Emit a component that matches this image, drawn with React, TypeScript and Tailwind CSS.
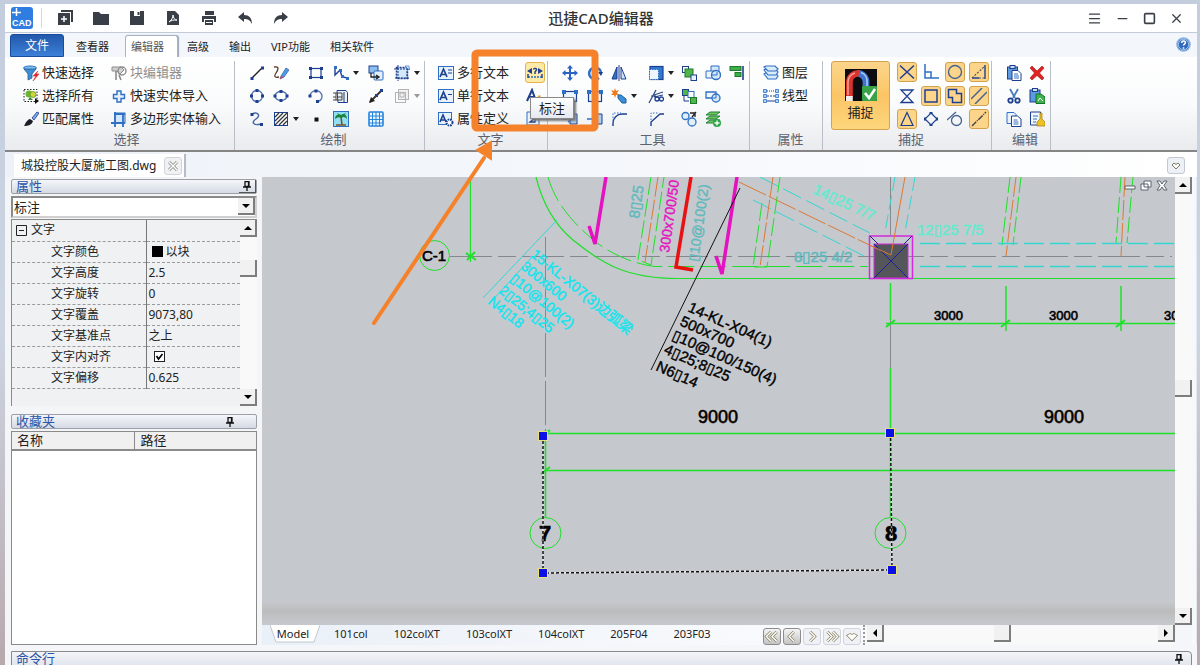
import React, { useState } from 'react'
import { Menu, Minus, Square, X } from 'lucide-react'

const UI_FONT = "font-['Noto_Sans','Noto_Sans_CJK_SC',sans-serif]"

const NAVY = '#1d3f8f'
const BLUE = '#2f6fc4'

const glyphs: Record<string, React.ReactNode> = {
  filter: (
    <>
      <ellipse cx="7" cy="3" rx="6.5" ry="2" fill="#7cc0ee" stroke={BLUE} />
      <path d="M1 4l4 5v6l4-2V9l4-5z" fill="#3f8ed2" stroke="#225d9e" strokeWidth=".8" />
      <path d="M15 6l-5 5h3l-3 5 6-7h-3z" fill="#e02a2a" stroke="#e02a2a" strokeWidth=".6" />
    </>
  ),
  selectAll: (
    <>
      <rect x="1" y="1.5" width="13" height="12" fill="none" stroke="#222" strokeDasharray="1.5 1.5" />
      <circle cx="6" cy="6" r="3.5" fill="#6bb432" />
      <circle cx="10" cy="6.5" r="3" fill="#cfd63a" stroke="#4c8a1e" strokeWidth=".7" />
      <path d="M5 12l2-3 3 3z" fill="#2f8a3c" />
      <path d="M12 10v6l4-3z" fill="#111" />
    </>
  ),
  brush: (
    <>
      <path d="M9 7l5-6 2 1-5 7z" fill="#7fa9e0" stroke={NAVY} strokeWidth=".8" />
      <path d="M1 15c1-1 2-6 6-7l3 2c-1 4-5 5-9 5z" fill="#1c1c28" />
    </>
  ),
  blockEdit: (
    <>
      <path d="M1 2h9l3 3-4 4-3-3H1z" fill="#d0d0d0" stroke="#8c8c8c" />
      <circle cx="11" cy="6" r="4" fill="none" stroke="#8c8c8c" strokeWidth="1.4" />
      <path d="M5 6v9M8 10l2 5" stroke="#8c8c8c" strokeWidth="1.6" />
    </>
  ),
  plus: <path d="M6 3h4v3.500h3.500v4H10V14H6v-3.500H2.500v-4H6z" fill="#e6f1fd" stroke={BLUE} strokeWidth="1.4" />,
  poly: (
    <>
      <rect x="4" y="2" width="10" height="10" fill="#d2e7fa" stroke={BLUE} />
      <path d="M4 1v15M0 12h14M12 2v14M3 3h11" stroke={BLUE} strokeWidth="1.8" />
    </>
  ),
  line: (
    <>
      <path d="M3 13L13 3" stroke="#222" strokeWidth="1.3" />
      <path d="M1.500 12h3v3h-3zM12 1.500h3v3h-3z" fill={NAVY} />
    </>
  ),
  sketch: (
    <>
      <path d="M1 2c6-1 4 3 2 6s-2 5 3 4" fill="none" stroke="#5a3820" strokeWidth="1.3" />
      <path d="M8 11l5-8 3 2-5 7-4 2z" fill="#4aa0e8" stroke={NAVY} strokeWidth=".6" />
      <path d="M7 14l1-3 3 1z" fill="#d24848" />
    </>
  ),
  rect: (
    <>
      <rect x="3" y="3.500" width="10" height="9" fill="none" stroke={NAVY} strokeWidth="1.2" />
      <path d="M1 2h3v3H1zM12 2h3v3h-3zM1 11h3v3H1zM12 11h3v3h-3z" fill={NAVY} />
    </>
  ),
  polyline: (
    <>
      <path d="M2 3v7l5-5 2 7 6 1" fill="none" stroke={NAVY} strokeWidth="1.4" />
      <path d="M1 1h3v3H1zM6 4h3v3H6zM8 10h3v3H8zM13 12h3v3h-3z" fill={BLUE} />
    </>
  ),
  insert: (
    <>
      <rect x="1" y="1" width="9" height="7" fill="#8bc0ee" stroke={NAVY} />
      <rect x="6" y="6" width="9" height="9" rx="1" fill="#e3f0fc" stroke={BLUE} />
      <path d="M3 8v4h7M8 10l3 2-3 2" fill="none" stroke="#222" strokeWidth="1.3" />
    </>
  ),
  region: (
    <>
      <rect x="2.500" y="2.500" width="11" height="11" fill="#d3e8fa" stroke={NAVY} strokeDasharray="2 1" strokeWidth="1.5" />
      <path d="M0 4h16M4 0v16M1 13h14M13 6v9" stroke={NAVY} strokeDasharray="2 1" />
      <path d="M11 1h4v4z" fill="#ecf4fc" stroke={BLUE} strokeWidth=".7" />
    </>
  ),
  circle: (
    <>
      <circle cx="8" cy="8" r="5.500" fill="none" stroke="#5878b0" strokeWidth="1.4" />
      <path d="M6.500 1h3v3h-3zM6.500 12h3v3h-3zM1 6.500h3v3H1zM12 6.500h3v3h-3z" fill={NAVY} />
    </>
  ),
  ellipse: (
    <>
      <ellipse cx="8" cy="8" rx="6" ry="4.500" fill="none" stroke="#5878b0" strokeWidth="1.4" />
      <path d="M6.500 2h3v3h-3zM6.500 11h3v3h-3zM.5 6.500h3v3h-3zM12.500 6.500h3v3h-3z" fill={NAVY} />
    </>
  ),
  arc: (
    <>
      <path d="M2 8a6 5.500 0 1 1 8 5.500" fill="none" stroke="#5878b0" strokeWidth="1.5" />
      <path d="M.5 6.500h3v3h-3zM6.500 1.500h3v3h-3zM8 12h3v3H8z" fill={NAVY} />
    </>
  ),
  scroll: (
    <>
      <path d="M4 2.500h9l1.500 2v10H5z" fill="#eef3fa" stroke={NAVY} />
      <path d="M3 5h6v7H3zM0 5h3M0 9h3M0 12h3M5 9h4" fill="none" stroke="#444" />
      <path d="M11 4v10" stroke="#7f97bd" strokeWidth="2" />
    </>
  ),
  ray: (
    <>
      <path d="M2 14L13 3" stroke="#4a2f20" strokeWidth="2" />
      <path d="M1 15l2-6 4 4z" fill="#222" />
      <path d="M12 1h3v3h-3zM7 6h3v3H7z" fill={NAVY} />
    </>
  ),
  copyGrey: (
    <>
      <rect x="4.500" y="1.500" width="10" height="10" fill="#f1f1f1" stroke="#b3b3b3" />
      <rect x="1.500" y="4.500" width="10" height="10" fill="none" stroke="#b3b3b3" />
      <rect x="6" y="5" width="4" height="4" fill="none" stroke="#b3b3b3" />
    </>
  ),
  spline: (
    <>
      <path d="M3 3c6-3 9 2 4 5s-3 7 5 5" fill="none" stroke="#45679f" strokeWidth="1.4" />
      <path d="M1.500 2h3v3h-3zM11 12h3v3h-3z" fill={NAVY} />
    </>
  ),
  hatch: (
    <>
      <rect x="1.500" y="1.500" width="13" height="13" fill="#fff" stroke={NAVY} />
      <path d="M2 6l4-4M2 10l8-8M2 14L14 2M6 14l8-8M10 14l4-4" stroke="#333" strokeWidth="1.2" />
    </>
  ),
  dot: <rect x="6.500" y="6.500" width="4" height="4" fill="#111" />,
  palm: (
    <>
      <rect x=".5" y=".5" width="15" height="15" fill="#8fe0f5" stroke={BLUE} />
      <path d="M8 6l1 8M3 14h10" stroke="#7c5221" strokeWidth="1.6" />
      <path d="M2 8c0-4 2-5 6-4 2-2 6-1 6 4-2-2-3-2-5-2-2 0-4 0-7 2zM4 2l4 2 5-2-4 5-2 0z" fill="#1d8338" />
    </>
  ),
  table: (
    <>
      <rect x="1" y="1" width="14" height="14" rx="1" fill="#eaf4fd" stroke="#2584dc" strokeWidth="1.6" />
      <path d="M1 5h14M1 8.500h14M1 12h14M4.500 1v14M8 1v14M11.500 1v14" stroke="#2584dc" />
    </>
  ),
  mtext: (
    <>
      <rect x=".5" y="1.500" width="15" height="13" fill="#e8f2fc" stroke={BLUE} />
      <path d="M2 12L5.500 4 9 12M3.500 9.500h4" fill="none" stroke={NAVY} strokeWidth="1.7" />
      <path d="M10 5h4M10 8h4" stroke={NAVY} />
    </>
  ),
  stext: (
    <>
      <rect x=".5" y="1.500" width="15" height="13" fill="#e8f2fc" stroke={BLUE} />
      <path d="M2 12L5.500 4 9 12M3.500 9.500h4" fill="none" stroke={NAVY} strokeWidth="1.7" />
      <path d="M10 6.500h4" stroke={NAVY} />
    </>
  ),
  attdef: (
    <>
      <rect x=".5" y="1.500" width="13" height="12" fill="#e8f2fc" stroke={BLUE} />
      <path d="M2 11L5 4l3 7M3 9h4" fill="none" stroke={NAVY} strokeWidth="1.6" />
      <circle cx="11.500" cy="11.500" r="3" fill="#fff" stroke={NAVY} strokeWidth="2" strokeDasharray="1.600 .8" />
    </>
  ),
  dim: (
    <>
      <path d="M0 6l5-3v6zM16 6l-5-3v6z" fill={NAVY} />
      <path d="M6.500 4.500c.5-2 3.500-1 3 .5L8 7v2" fill="none" stroke={NAVY} strokeWidth="1.4" />
      <path d="M1 12h14" stroke={BLUE} strokeWidth="1.6" strokeDasharray="2 1" />
      <path d="M1 9v4M15 9v4" stroke={NAVY} strokeWidth="1.400" />
    </>
  ),
  styleA: (
    <>
      <path d="M2 13L7 2l4 11M4 9h6" fill="none" stroke={NAVY} strokeWidth="2" />
      <path d="M9 13l5-6 2 1-5 6z" fill="#e6a93a" />
    </>
  ),
  page: (
    <>
      <path d="M2 1h12v13H2z" fill="#e8f2fc" stroke={BLUE} />
      <path d="M5 11l5-4v4zM1 15h13" fill="none" stroke={NAVY} strokeWidth="1.3" />
    </>
  ),
  move: (
    <path d="M8 0l3 3.500H9V7h3.500V5L16 8l-3.500 3V9H9v3.500h2L8 16l-3-3.500h2V9H3.500v2L0 8l3.500-3v2H7V3.500H5z" fill="#2a63c4" />
  ),
  rotate: (
    <>
      <path d="M12 13A6 6 0 1 1 14 7" fill="none" stroke={BLUE} strokeWidth="2.5" />
      <path d="M11 7h5l-2 4z" fill={NAVY} />
    </>
  ),
  mirror: (
    <>
      <path d="M6 2v12H1z" fill="#2f6fc4" stroke={NAVY} />
      <path d="M10 2v12h5z" fill="#cfe3f8" stroke={NAVY} />
      <path d="M8 0v16" stroke={NAVY} />
    </>
  ),
  scale: (
    <>
      <rect x="2" y="1.500" width="13" height="13" fill="#2f79d0" stroke={NAVY} strokeWidth="1.2" />
      <rect x="1.500" y="4.500" width="9" height="10" fill="#eef6fd" stroke={BLUE} strokeDasharray="1.500 1" />
    </>
  ),
  group: (
    <>
      <rect x="1.500" y="1.500" width="6" height="6" fill="#fff" stroke={NAVY} />
      <rect x="4" y="4" width="8" height="8" fill="#4fb748" stroke="#1e7a2b" />
      <rect x="10" y="10" width="5.500" height="5.500" fill="#eaf4fd" stroke={NAVY} />
    </>
  ),
  group2: (
    <>
      <rect x="1.500" y="1.500" width="6" height="6" fill="#4fb748" stroke={NAVY} />
      <rect x="7" y="3.500" width="6" height="6" fill="#fff" stroke={BLUE} />
      <rect x="9.500" y="9.500" width="6" height="6" fill="#4fb748" stroke="#1e7a2b" />
      <path d="M3 8v5h5" fill="none" stroke={NAVY} />
    </>
  ),
  shapes: (
    <>
      <path d="M6 1h8v6H6z" fill="#d3e8fa" stroke={BLUE} />
      <path d="M1 6h8v7H1z" fill="#eef6fd" stroke={BLUE} />
      <circle cx="11" cy="10" r="4.500" fill="#d3e8fa" stroke={BLUE} strokeWidth="1.3" />
      <path d="M7 10h5v-3" fill="none" stroke={BLUE} />
    </>
  ),
  shapes2: (
    <>
      <path d="M1 4h10v6H1z" fill="#eef6fd" stroke={BLUE} strokeWidth="1.300" />
      <circle cx="11" cy="10" r="4" fill="#d3e8fa" stroke={BLUE} strokeWidth="1.3" />
      <path d="M8 10h3v-4" fill="none" stroke={BLUE} />
    </>
  ),
  align: (
    <>
      <rect x="1" y="1.500" width="11" height="4" fill="#3fae49" stroke="#1e7a2b" />
      <rect x="6" y="7.500" width="6" height="4" fill="#3fae49" stroke="#1e7a2b" />
      <path d="M14 1v14" stroke={NAVY} strokeWidth="1.600" />
    </>
  ),
  box: (
    <>
      <rect x="1.500" y="3.500" width="13" height="10" fill="#eef6fd" stroke={NAVY} strokeWidth="1.2" />
      <path d="M0 2h4v4H0zM12 2h4v4h-4z" fill={BLUE} />
    </>
  ),
  explode: (
    <>
      <path d="M4 0l1 3 3-1-2 3 2 2-3 0-1 3-1-3-3 0 2-2-2-3 3 1z" fill="#f07b1c" />
      <path d="M7 7l3 0 5 4 0 4-4 0-4-5z" fill="#3a8fd8" stroke="#1f5c96" />
    </>
  ),
  trim: (
    <>
      <path d="M1 15L8 2" stroke="#2f4c86" strokeWidth="1.300" />
      <path d="M3 8h5M6 7l9-3M6 9l9-2" stroke="#2f4c86" strokeWidth="1.200" />
      <circle cx="9" cy="11" r="2" fill="none" stroke={NAVY} strokeWidth="1.300" />
      <circle cx="13.500" cy="11" r="2" fill="none" stroke={NAVY} strokeWidth="1.300" />
    </>
  ),
  stretch: (
    <>
      <path d="M8 3h7v10H8z" fill="#a8cef2" stroke={NAVY} />
      <path d="M0 8h9M6 5l4 3-4 3" fill="none" stroke={BLUE} strokeWidth="1.600" />
    </>
  ),
  fillet: (
    <>
      <path d="M2 15V12a9 9 0 0 1 9-9h5" fill="none" stroke={NAVY} strokeWidth="1.400" />
      <path d="M2 10V2h8" fill="none" stroke={BLUE} strokeDasharray="1.500 1.500" />
    </>
  ),
  chamfer: (
    <>
      <path d="M3 15V11l9-8h4" fill="none" stroke={NAVY} strokeWidth="1.400" />
      <path d="M3 9V2h8" fill="none" stroke={BLUE} strokeDasharray="1.500 1.500" />
    </>
  ),
  link: (
    <>
      <circle cx="4.500" cy="5" r="3.500" fill="#e2effb" stroke={BLUE} strokeWidth="1.300" />
      <circle cx="11" cy="11" r="4" fill="#e2effb" stroke={BLUE} strokeWidth="1.300" />
      <path d="M9 2h5v4M11 6l4-5" fill="none" stroke="#222" strokeWidth="1.300" />
    </>
  ),
  layersGreen: (
    <>
      <path d="M1 4l4-3h10l-4 3zM1 8l4-3h10l-4 3zM1 12l4-3h10l-4 3z" fill="#6cc65f" stroke="#23803a" />
      <circle cx="12" cy="12" r="4" fill="#2fa348" />
      <path d="M12 9.500v5M9.500 12h5" stroke="#fff" strokeWidth="1.300" />
    </>
  ),
  layers: (
    <>
      <path d="M1 9l3-2h8l3 4-2 3H5z" fill="#d9ecfb" stroke={BLUE} strokeWidth="1.200" />
      <path d="M1 5l3-2h8l3 4-2 3H5z" fill="#d9ecfb" stroke={BLUE} strokeWidth="1.200" />
      <path d="M1 2l2-1h9l3 3-2 2H5z" fill="#d9ecfb" stroke={BLUE} strokeWidth="1.200" />
    </>
  ),
  ltype: (
    <>
      <path d="M4 3h9" stroke={NAVY} strokeDasharray="1 1" />
      <path d="M4 8h9" stroke={NAVY} strokeDasharray="2 1" />
      <path d="M4 13h9" stroke={NAVY} />
      <path d="M.5 1.500h3v3h-3zM.5 6.500h3v3h-3zM.5 11.500h3v3h-3zM12.500 1.500h3v3h-3zM12.500 6.500h3v3h-3zM12.500 11.500h3v3h-3z" fill="#a9d2f4" stroke={BLUE} strokeWidth=".8" />
    </>
  ),
  sCross: <path d="M1 1.500l14 13M15 1.500l-14 13" stroke={NAVY} strokeWidth="1.500" />,
  sPerp: <path d="M2 0v14h14M2 8h6v6" fill="none" stroke={BLUE} strokeWidth="1.500" />,
  sCircle: <circle cx="8" cy="8" r="6.500" fill="none" stroke="#48648e" strokeWidth="1.400" />,
  sExt: (
    <>
      <path d="M1 14H8M14 15V1" fill="none" stroke={NAVY} strokeWidth="1.400" />
      <path d="M1 14L14 2M8 14h6" stroke="#555" strokeDasharray="2 1.500" strokeWidth="1.200" />
    </>
  ),
  sHour: <path d="M2 2h12L2 14.500h12L2 2z" fill="none" stroke={NAVY} strokeWidth="1.300" />,
  sSquare: <rect x="2" y="2" width="12" height="12" fill="none" stroke={NAVY} strokeWidth="1.500" />,
  sPoly: <path d="M1.500 1.500h8v4h5v9h-9v-5h-4z" fill="none" stroke={NAVY} strokeWidth="1.500" />,
  sPar: <path d="M0 11L11 0M4 16L16 4" stroke="#48648e" strokeWidth="1.500" />,
  sTri: <path d="M8 1.500l6 13H2z" fill="none" stroke={NAVY} strokeWidth="1.200" />,
  sQuad: (
    <>
      <path d="M8 2l6 6-6 6-6-6z" fill="none" stroke={NAVY} strokeWidth="1.200" />
      <path d="M6.500 1h3v2h-3zM6.500 13h3v2h-3zM1 6.500h2v3H1zM13 6.500h2v3h-2z" fill={NAVY} />
    </>
  ),
  sTan: (
    <>
      <circle cx="9.500" cy="9.500" r="5" fill="none" stroke="#48648e" strokeWidth="1.300" />
      <path d="M0 9L9 1" stroke="#48648e" strokeWidth="1.300" />
    </>
  ),
  sNear: <path d="M1 15L15 1" stroke="#444" strokeWidth="1.400" strokeDasharray="6 1 1 1" />,
  paste: (
    <>
      <rect x="1.500" y="2" width="10" height="12" fill="#5c9be0" stroke={NAVY} />
      <rect x="4" y=".5" width="5" height="3" fill="#cfdff2" stroke={NAVY} />
      <path d="M6 5.500h6l3 3v7H6z" fill="#fff" stroke={NAVY} />
      <path d="M8 9h4M8 11h5M8 13h5" stroke={BLUE} />
    </>
  ),
  del: <path d="M3 1l5 5 5-5 2 2-4.500 5L15 13l-2 2-5-4.500L3 15l-2-2 4.500-5L1 3z" fill="#df2323" stroke="#a31212" strokeWidth=".6" />,
  cut: (
    <>
      <path d="M4 1l5 9M12 1L7 10" stroke="#4a7dc0" strokeWidth="1.800" />
      <circle cx="4.500" cy="12.500" r="2.200" fill="none" stroke={NAVY} strokeWidth="1.800" />
      <circle cx="11.500" cy="12.500" r="2.200" fill="none" stroke={NAVY} strokeWidth="1.800" />
    </>
  ),
  pasteGreen: (
    <>
      <rect x="1" y="2" width="10" height="12" fill="#5c9be0" stroke={NAVY} />
      <rect x="3.500" y=".5" width="5" height="3" fill="#cfdff2" stroke={NAVY} />
      <path d="M7 6h5l4 3v6.500H7z" fill="#3fb34c" stroke="#16702a" />
      <path d="M9 13l2-3 3 3" fill="none" stroke="#fff" />
    </>
  ),
  copy: (
    <>
      <path d="M1 1.500h7l2 2v9H1z" fill="#eaf3fc" stroke={BLUE} />
      <path d="M5.500 5h6l3.500 3v7.500H5.500z" fill="#fff" stroke={NAVY} />
      <path d="M7.500 9h4M7.500 11h5M7.500 13h5" stroke={BLUE} />
    </>
  ),
  clean: (
    <>
      <path d="M1.500 1h10v13h-10z" fill="#f2f7fd" stroke={NAVY} />
      <path d="M4 5h5M4 8h4M4 11h3" stroke={BLUE} />
      <path d="M11 2h2v6l3 3v4H8v-4l3-3z" fill="#edc227" stroke="#9b7a0a" strokeWidth=".7" />
    </>
  ),
  magnet: (
    <>
      <rect x="0" y="0" width="16" height="16" fill="#0b0b10" />
      <path d="M6.500 2.200A4.300 4.300 0 0 1 10.500 6.500V10" fill="none" stroke="#3f74cf" strokeWidth="3.400" />
      <path d="M2.200 14V6.500A4.300 4.300 0 0 1 7 2.200" fill="none" stroke="#d9332c" strokeWidth="3.400" />
      <path d="M1.500 13V6.500A5 5 0 0 1 5 2" fill="none" stroke="#f39b93" strokeWidth=".8" />
      <path d="M8 1.800A4.500 4.500 0 0 1 11 6.500V9" fill="none" stroke="#a9c8f2" strokeWidth=".8" />
      <path d="M.5 13.500h3.400V16H.5z" fill="#eee" />
      <rect x="8.500" y="8.500" width="7.500" height="7.500" rx=".5" fill="#38a249" />
      <path d="M10 12l2 2.500 3-4.500" fill="none" stroke="#fff" strokeWidth="1.300" />
    </>
  ),
}

const Glyph = ({ name, className = 'h-4 w-4' }: { name: string; className?: string }) => (
  <svg viewBox="0 0 16 16" className={`shrink-0 ${className}`} aria-hidden="true">{glyphs[name]}</svg>
)

const Caret = ({ grey }: { grey?: boolean }) => (
  <svg viewBox="0 0 6 4" className="h-1 w-1.5 shrink-0"><path d="M0 0h6L3 4z" fill={grey ? '#999' : '#222'} /></svg>
)

// a trailing "v" in the third slot means the tool has a drop-down
type Tool = [string, string, string?]

const ToolButton = ({ tool }: { tool: Tool | null }) =>
  tool ? (
    <button type="button" aria-label={tool[1]} className="flex h-[23px] items-center gap-1">
      <Glyph name={tool[0]} />
      {tool[2] && <Caret grey={tool[0] === 'copyGrey'} />}
    </button>
  ) : (
    <span />
  )

const TextTool = ({ icon, label, muted }: { icon: string; label: string; muted?: boolean }) => (
  <button type="button" className={`flex h-[23px] items-center gap-[3px] whitespace-nowrap text-[13px] leading-[23px] ${muted ? 'text-[#8f8f8f]' : 'text-[#222]'}`}>
    <Glyph name={icon} />
    {label}
  </button>
)

const Group = ({ title, className, children }: { title: string; className: string; children: React.ReactNode }) => (
  <section className={`flex shrink-0 flex-col border-r border-[#b9bfc8] ${className}`}>
    <div className="h-[69px]">{children}</div>
    <h2 className="whitespace-nowrap text-center text-[13px] leading-[18px] text-[#5c6370]">{title}</h2>
  </section>
)

const drawTools: (Tool | null)[] = [
  ['line', '直线'], ['sketch', '草图'], ['rect', '矩形'], ['polyline', '多段线', 'v'], ['insert', '插入块'], ['region', '面域', 'v'],
  ['circle', '圆'], ['ellipse', '椭圆'], ['arc', '圆弧'], ['scroll', '云线'], ['ray', '射线'], ['copyGrey', '边界', 'v'],
  ['spline', '样条曲线'], ['hatch', '填充', 'v'], ['dot', '点'], ['palm', '图像'], ['table', '表格'], null,
]

const modifyTools: (Tool | null)[] = [
  ['move', '移动'], ['rotate', '旋转'], ['mirror', '镜像'], ['scale', '缩放', 'v'], ['group', '组'], ['shapes', '合并'], ['align', '对齐'],
  ['box', '拉长'], ['box', '阵列'], ['explode', '分解', 'v'], ['trim', '修剪', 'v'], ['group2', '取消组'], ['shapes2', '差集'], null,
  ['stretch', '拉伸'], ['stretch', '延伸'], ['fillet', '圆角'], ['chamfer', '倒角'], ['link', '替换'], ['layersGreen', '添加图层'], null,
]

const snaps: [string, boolean][] = [
  ['sCross', true], ['sPerp', false], ['sCircle', true], ['sExt', true],
  ['sHour', false], ['sSquare', true], ['sPoly', true], ['sPar', true],
  ['sTri', true], ['sQuad', false], ['sTan', false], ['sNear', true],
]

const editTools: Tool[] = [
  ['paste', '粘贴'], ['del', '删除'],
  ['cut', '剪切'], ['pasteGreen', '粘贴为块'],
  ['copy', '复制'], ['clean', '清理'],
]

const Ribbon = () => (
  <div className="flex h-[95px] shrink-0 overflow-hidden border-b-2 border-[#858585] bg-linear-to-b from-white via-[#fafbfc] to-[#e9ebee] pt-1">
    <Group title="选择" className="w-[230px] pl-[18px] pr-1">
      <div className="grid grid-cols-[88px_auto] justify-start">
        <TextTool icon="filter" label="快速选择" />
        <TextTool icon="blockEdit" label="块编辑器" muted />
        <TextTool icon="selectAll" label="选择所有" />
        <TextTool icon="plus" label="快速实体导入" />
        <TextTool icon="brush" label="匹配属性" />
        <TextTool icon="poly" label="多边形实体输入" />
      </div>
    </Group>
    <Group title="绘制" className="w-[190px] pl-[14px] pr-1.5">
      <div className="grid grid-cols-[24px_35px_25px_35px_26px_30px]">
        {drawTools.map((tool, i) => <ToolButton key={i} tool={tool} />)}
      </div>
    </Group>
    <Group title="文字" className="w-[123px] pl-[13px] pr-1">
      <div className="grid grid-cols-[87px_auto] justify-start">
        <TextTool icon="mtext" label="多行文本" />
        <button type="button" aria-label="标注" className="my-px flex h-[21px] w-[20px] items-center justify-center rounded-[3px] border border-[#e3b54f] bg-[#fdeaa6]"><Glyph name="dim" /></button>
        <TextTool icon="stext" label="单行文本" />
        <ToolButton tool={['styleA', '文字样式']} />
        <TextTool icon="attdef" label="属性定义" />
        <ToolButton tool={['page', '字段']} />
      </div>
    </Group>
    <Group title="工具" className="w-[202px] pl-[14px] pr-1.5">
      <div className="grid grid-cols-[25px_24px_37px_33px_24px_24px_16px]">
        {modifyTools.map((tool, i) => <ToolButton key={i} tool={tool} />)}
      </div>
    </Group>
    <Group title="属性" className="w-[73px] pl-[13px] pr-1">
      <TextTool icon="layers" label="图层" />
      <TextTool icon="ltype" label="线型" />
    </Group>
    <Group title="捕捉" className="w-[169px] pl-[8px]">
      <div className="flex gap-[7px]">
        <button type="button" className="flex h-[69px] w-[59px] flex-col items-center rounded-[3px] border border-[#d2a24c] bg-linear-to-b from-[#fbd58a] via-[#fbc565] to-[#fdd67c] pt-[7px] text-[13px] leading-[22px] text-[#222]">
          <Glyph name="magnet" className="h-8 w-8" />
          捕捉
        </button>
        <div className="grid grid-cols-4 gap-x-1 gap-y-[3px] pt-px">
          {snaps.map(([name, on]) => (
            <button
              key={name}
              type="button"
              aria-label={name}
              aria-pressed={on}
              className={`flex h-[20px] w-[20px] items-center justify-center rounded-[3px] border ${on ? 'border-[#d2a24c] bg-[#fcd58b]' : 'border-transparent'}`}
            >
              <Glyph name={name} />
            </button>
          ))}
        </div>
      </div>
    </Group>
    <Group title="编辑" className="w-[59px] pl-[14px] pr-1.5">
      <div className="grid grid-cols-[23px_16px]">
        {editTools.map((tool) => <ToolButton key={tool[0]} tool={tool} />)}
      </div>
    </Group>
  </div>
)

const quickIcons: [string, React.ReactNode][] = [
  ['新建', <><path d="M4 0h12v12h-2V2H4z" fill="#3a3f47" /><rect x="1" y="3" width="12" height="12" fill="#3a3f47" /><path d="M7 6v6M4 9h6" stroke="#fff" strokeWidth="1.500" /></>],
  ['打开', <path d="M0 2h6l2 2h8v11H0z" fill="#3a3f47" />],
  ['保存', <><path d="M1 1h14v14H1z" fill="#3a3f47" /><path d="M5 1h6v5H5z" fill="#fff" /><path d="M8.500 2h2v3h-2z" fill="#3a3f47" /></>],
  ['导出PDF', <><path d="M2 1h8l4 4v10H2z" fill="#3a3f47" /><path d="M4 12c3-2 4-5 4-7 0 3 2 5 4 5-3 0-6 0-8 2z" fill="none" stroke="#fff" /></>],
  ['打印', <><path d="M4 1h9v4H4zM1 6h14v6h-2V9H3v3H1zM4 10h8v5H4z" fill="#3a3f47" /><path d="M5 12.500h6" stroke="#fff" /></>],
  ['撤销', <path d="M1 7l6-5v3c5 0 8 3 8 9-2-4-4-5-8-5v3z" fill="#3a3f47" />],
  ['重做', <path d="M15 7L9 2v3c-5 0-8 3-8 9 2-4 4-5 8-5v3z" fill="#3a3f47" />],
]

const TitleBar = () => (
  <header className="relative flex h-[29px] shrink-0 items-center border-b border-[#c3cbd8] bg-white text-[#3a3f47]">
    <svg viewBox="0 0 22 22" className="ml-[6px] h-[22px] w-[22px]">
      <rect width="22" height="22" rx="3" fill="#2f7de0" />
      <path d="M1 5.500h9M5.500 1v8" stroke="#fff" strokeWidth="1.500" />
      <text x="1" y="18.500" fontSize="9" fontWeight="bold" fill="#fff" fontFamily="Liberation Sans">CAD</text>
    </svg>
    <span className="ml-2 h-5 w-px bg-[#d4d8de]" />
    <nav className="ml-[15px] flex items-center gap-5">
      {quickIcons.map(([label, icon]) => (
        <button key={label} type="button" aria-label={label}><svg viewBox="0 0 16 16" className="h-4 w-4">{icon}</svg></button>
      ))}
    </nav>
    <h1 className="absolute left-1/2 -translate-x-1/2 text-[15px] font-medium leading-7 text-[#333]">迅捷CAD编辑器</h1>
    <div className="ml-auto mr-[13px] flex gap-[13px]">
      <button type="button" aria-label="菜单"><Menu size={15} strokeWidth={2} /></button>
      <button type="button" aria-label="最小化"><Minus size={15} strokeWidth={2} /></button>
      <button type="button" aria-label="最大化"><Square size={13} strokeWidth={3} /></button>
      <button type="button" aria-label="关闭"><X size={15} strokeWidth={2} /></button>
    </div>
  </header>
)

const menus = ['高级', '输出', 'VIP功能', '相关软件']

const MenuTabs = () => (
  <nav className="flex h-6 shrink-0 items-end bg-[#f3f6fb] text-[11px] leading-[20px] text-[#222]">
    <button type="button" className="ml-[5px] h-[23px] w-[54px] rounded-t-[3px] border border-[#174d9c] bg-linear-to-b from-[#2459ab] to-[#3b80d8] text-[12px] text-white">文件</button>
    <button type="button" className="ml-3">查看器</button>
    <button type="button" className="ml-4 h-[22px] w-[53px] rounded-t-[3px] border border-b-0 border-[#a9b5c6] bg-white pr-2 text-[#555] shadow-[1px_0_1px_#9aa6b8]">编辑器</button>
    <div className="ml-[9px] flex gap-5">
      {menus.map((m) => <button key={m} type="button">{m}</button>)}
    </div>
    <button type="button" aria-label="帮助" className="mb-[5px] ml-auto mr-[6px]">
      <svg viewBox="0 0 16 16" className="h-[15px] w-[15px]">
        <circle cx="8" cy="8" r="7" fill="#2e6bbd" stroke="#8ab2e4" strokeWidth="1.500" />
        <circle cx="8" cy="8" r="5.500" fill="none" stroke="#fff" strokeWidth=".6" />
        <path d="M6 6.500c0-3 4-3 4-.5 0 1.500-2 1.500-2 3M8 11v1.500" fill="none" stroke="#fff" strokeWidth="1.600" />
      </svg>
    </button>
  </nav>
)

const Pin = () => (
  <svg viewBox="0 0 10 10" className="h-2.5 w-2.5"><path d="M3 .5h4v5H3zM1 6h8M5 6v4M6.500 1v5" fill="none" stroke="#111" strokeWidth="1.300" /></svg>
)

const PanelHeader = ({ title, pin }: { title: string; pin: string }) => (
  <div className="flex h-[15px] items-center justify-between rounded-[2px] border border-[#9a9fa8] bg-linear-to-b from-[#f4f6fa] to-[#d5dae3] pl-1">
    <h2 className="text-[13px] leading-[13px] text-[#2c55a5]">{title}</h2>
    <button type="button" aria-label="固定" className={pin}><Pin /></button>
  </div>
)

type Dir = 'up' | 'down' | 'left' | 'right'
const arrows: Record<Dir, string> = {
  up: 'M0 6h8L4 2z',
  down: 'M0 2h8L4 6z',
  left: 'M6 0v8L2 4z',
  right: 'M2 0v8l4-4z',
}
const ScrollButton = ({ dir }: { dir: Dir }) => (
  <button type="button" aria-label={dir} className="flex h-[17px] w-[17px] shrink-0 items-center justify-center border-b-2 border-r-2 border-[#7d7d7d] bg-[#f1f1f1]">
    <svg viewBox="0 0 8 8" className="h-2 w-2"><path d={arrows[dir]} fill="#000" /></svg>
  </button>
)
const Thumb = () => <div className="h-[17px] w-[17px] shrink-0 border-b-2 border-r-2 border-[#7d7d7d] bg-[#f1f1f1]" />

const PropertiesPanel = () => {
  const [aligned, setAligned] = useState(true)
  const rows: [string, React.ReactNode][] = [
    ['文字颜色', <span className="flex items-center gap-[3px] pl-[3px]"><i className="h-[11px] w-[11px] bg-black" />以块</span>],
    ['文字高度', '2.5'],
    ['文字旋转', '0'],
    ['文字覆盖', '9073,80'],
    ['文字基准点', '之上'],
    ['文字内对齐', (
      <span className="relative ml-[5px] block h-[11px] w-[11px]">
        <input type="checkbox" aria-label="文字内对齐" checked={aligned} onChange={(e) => setAligned(e.target.checked)} className="block h-[11px] w-[11px] appearance-none border border-[#222] bg-white" />
        {aligned && <svg viewBox="0 0 11 11" className="pointer-events-none absolute inset-0"><path d="M2.500 5l2 3 4-5" fill="none" stroke="#000" strokeWidth="1.700" /></svg>}
      </span>
    )],
    ['文字偏移', '0.625'],
  ]
  return (
    <aside className="flex w-[257px] shrink-0 flex-col bg-[#f4f5f7] pl-[6px] pr-[5px] pt-[2px] text-[12px] text-[#222]">
      <PanelHeader title="属性" pin="flex h-[13px] w-[17px] items-center justify-center border-b border-r border-[#555]" />
      <div className="relative mt-[2px] flex h-[22px] items-center border-2 border-[#8a8a8a] border-b-[#d0d0d0] border-r-[#d0d0d0] bg-white">
        <select aria-label="对象类型" className="w-full appearance-none bg-transparent pl-px text-[13px] leading-[18px] outline-none">
          <option>标注</option>
        </select>
        <span className="pointer-events-none absolute right-0 top-0"><ScrollButton dir="down" /></span>
      </div>
      <div className="mt-px flex h-[187px] border-l border-t border-[#8a8a8a] bg-[#f0f1f3]">
        <div className="flex-1">
          <table className="w-full table-fixed border-collapse">
            <tbody>
              <tr className="h-[21px] border-b border-dashed border-[#9b9b9b]">
                <td className="w-[134px] border-r border-r-[#777] p-0">
                  <button type="button" className="flex items-center gap-1 pl-1 leading-[20px]">
                    <svg viewBox="0 0 11 11" className="h-[11px] w-[11px]"><path d="M.5.5h10v10H.5zM3 5.500h5" fill="none" stroke="#222" /></svg>
                    文字
                  </button>
                </td>
                <td className="p-0" />
              </tr>
              {rows.map(([name, value]) => (
                <tr key={name} className="h-[21px] border-b border-dashed border-[#9b9b9b]">
                  <th scope="row" className="border-r border-r-[#777] border-solid border-b-0 p-0 pl-[39px] text-left font-normal leading-[20px]">{name}</th>
                  <td className="p-0 pl-[2px] leading-[20px]">{value}</td>
                </tr>
              ))}
            </tbody>
          </table>
        </div>
        <div className="flex w-[17px] flex-col bg-[#f9f9f9]">
          <ScrollButton dir="up" />
          <div className="h-[23px]" />
          <Thumb />
          <div className="flex-1" />
          <ScrollButton dir="down" />
        </div>
      </div>
      <div className="mt-[8px]"><PanelHeader title="收藏夹" pin="mr-[21px]" /></div>
      <div className="mt-[2px] flex flex-1 flex-col border border-[#8a8a8a] bg-white">
        <table className="w-full table-fixed border-collapse">
          <thead>
            <tr className="h-[18px] border-b-2 border-[#8a8a8a] bg-[#f0f0f0] text-left leading-[17px]">
              <th className="w-[122px] border-r border-[#8a8a8a] p-0 pl-[5px] text-[13px] font-normal">名称</th>
              <th className="p-0 pl-[6px] text-[13px] font-normal">路径</th>
            </tr>
          </thead>
        </table>
      </div>
    </aside>
  )
}

const G = '#1fe02a'
const CY = '#35d6d2'
const OR = '#dc7a35'
const grips = [[543, 436], [890, 433], [543, 573], [892, 570]]

const Drawing = () => (
  <svg viewBox="262 177 913 448" preserveAspectRatio="xMinYMin slice" className="block h-full w-full" fontFamily="'Liberation Sans','DejaVu Sans','Noto Sans CJK SC',sans-serif">
    <defs>
      <linearGradient id="floor" x1="0" y1="0" x2="0" y2="1">
        <stop offset="0" stopColor="#c5c8cd" />
        <stop offset=".4" stopColor="#bcbcbc" />
        <stop offset="1" stopColor="#c5c9ce" />
      </linearGradient>
    </defs>
    <rect x="262" y="177" width="913" height="448" fill="#c5c8cd" />
    <rect x="262" y="602" width="913" height="23" fill="url(#floor)" />

    <g fill="none" stroke="#85888c">
      <path d="M450 256.500H1172" strokeDasharray="42 6 18 6" />
      <path d="M545.500 237V430" strokeDasharray="44 4" />
      <path d="M890.500 177V235M890.500 283V370" />
    </g>

    <g fill="none" stroke={G}>
      <path d="M470.500 177V262M536 177C543 205 555 225 573 240C600 262 625 279 680 278.500H1175" strokeWidth="1.200" />
      <path d="M548 177C556 205 575 225 597 243C615 256 635 264 655 266.500H868" strokeDasharray="26 6" />
      <path d="M466 253l10 7M467 260l8-8" strokeWidth="2" />
      <circle cx="434.500" cy="255.500" r="15" />
      <path d="M651 177L638 260L651 265L664 177M762 203L753 267H767L780 177" strokeDasharray="18 4" />
      <path d="M1010 177L1002 245M1021 177L1013 245M1121 177L1116 243M1133 177L1127 243" strokeDasharray="16 4" />
      <path d="M545.500 430V517M890.500 283V320M890.500 368V517M886 323.500H1175M545 433.500H1175M545 470.500H1175M1006 286V331M1121 286V331" strokeWidth="1.500" />
      <path d="M886 327l9-7M1001 327l9-7M1116 327l9-7M541 437l9-7M541 474l9-7" strokeWidth="2" />
      <circle cx="545.500" cy="533" r="15.500" />
      <circle cx="890.500" cy="533" r="15.500" />
    </g>

    <g fill="none" stroke={CY}>
      <path d="M557 220L483 298M533 256L490 303" />
      <path d="M760 177L870 233M753 200L868 258" strokeDasharray="20 6" />
      <path d="M895 177L885 232M915 177L905 232" strokeDasharray="14 5" />
      <path d="M920 243.500H1175M920 266.500H1175" strokeDasharray="20 6" strokeWidth="1.300" />
    </g>

    <g fill="none" stroke={OR}>
      <path d="M658 177L645 262M773 177L760 267M1016 177L1006 256M1125 177L1121 256" strokeDasharray="20 3" />
      <path d="M739 182L890 255" strokeDasharray="30 3" />
    </g>

    <g fill="none" stroke="#e512c0" strokeWidth="3.500">
      <path d="M606 177L595 244L589 226" />
      <path d="M737 177L722 274L716 256" />
    </g>
    <path d="M691 177L676 267L693 270" fill="none" stroke="#e81212" strokeWidth="3.500" />
    <path d="M740 188L651 370" stroke="#111" />

    <g fontSize="15" strokeWidth=".4">
      <text transform="translate(639 219) rotate(-82)" fill="#5fb9bd" stroke="#5fb9bd">8▯25</text>
      <text transform="translate(669 253) rotate(-82)" fill="#e512c0" stroke="#e512c0" fontSize="14">300x700/50</text>
      <text transform="translate(698 262) rotate(-82)" fill="#5fb9bd" stroke="#5fb9bd" fontSize="14">▯10@100(2)</text>
    </g>
    <g fill="#66e8cf" stroke="#66e8cf" strokeWidth=".5" fontSize="15">
      <text transform="translate(812 193) rotate(25)">14▯25 7/7</text>
      <text x="917" y="235">12▯25 7/5</text>
      <text x="794" y="262" fill="#5fb9bd" stroke="#5fb9bd">8▯25 4/2</text>
    </g>
    <g fill="#16e4ee" stroke="#16e4ee" strokeWidth=".5" fontSize="14">
      <text transform="translate(530 256) rotate(39)">15-KL-X07(3)边弧梁</text>
      <text transform="translate(520 268) rotate(39)">300x600</text>
      <text transform="translate(509 280) rotate(39)">▯10@100(2)</text>
      <text transform="translate(498 292) rotate(39)">2▯25;4▯25</text>
      <text transform="translate(487 303) rotate(39)">N4▯18</text>
    </g>
    <g fill="#000" stroke="#000" strokeWidth=".4" fontSize="15">
      <text transform="translate(687 311) rotate(24)">14-KL-X04(1)</text>
      <text transform="translate(679 325) rotate(24)">500x700</text>
      <text transform="translate(671 339) rotate(24)">▯10@100/150(4)</text>
      <text transform="translate(663 353) rotate(24)">4▯25;8▯25</text>
      <text transform="translate(655 370) rotate(24)">N6▯14</text>
    </g>
    <g fill="#000" stroke="#000" strokeWidth=".6">
      <g fontSize="13">
        <text x="934" y="320">3000</text>
        <text x="1049" y="320">3000</text>
        <text x="1164" y="320">3000</text>
      </g>
      <g fontSize="18">
        <text x="698" y="423">9000</text>
        <text x="1044" y="423">9000</text>
        <text x="434" y="261" fontSize="15" textAnchor="middle">C-1</text>
        <text x="545" y="541" fontSize="22" textAnchor="middle" fontWeight="bold">7</text>
        <text x="891" y="541" fontSize="22" textAnchor="middle" fontWeight="bold">8</text>
      </g>
    </g>

    <rect x="869.500" y="236" width="43" height="42.500" fill="none" stroke="#d02bdc" strokeWidth="1.500" />
    <rect x="874" y="244" width="34" height="34" fill="#55565a" stroke="#d02bdc" />
    <path d="M870 236l8 8M912 236l-8 8M874 244l34 34M908 244l-34 34" stroke="#1b1f9c" />
    <path d="M905 177L891 255L869 245" fill="none" stroke={OR} />

    <path d="M543 436V573L892 570L890.500 433" fill="none" stroke="#fff" strokeWidth="1.500" strokeOpacity=".5" />
    <path d="M543 436V573L892 570L890.500 433" fill="none" stroke="#111" strokeWidth="1.500" strokeDasharray="3 2" />
    {grips.map(([x, y]) => (
      <rect key={`${x}-${y}`} x={x - 4.5} y={y - 4.5} width="9" height="9" fill="#0a10e6" stroke="#e8e07a" />
    ))}
  </svg>
)

const sheets = ['101col', '102colXT', '103colXT', '104colXT', '205F04', '203F03']
const pagers: [string, string][] = [
  ['首页', 'M7 3L2 8l5 5M13 3L8 8l5 5'],
  ['上一页', 'M10 3L5 8l5 5'],
  ['下一页', 'M6 3l5 5-5 5'],
  ['末页', 'M3 3l5 5-5 5M9 3l5 5-5 5'],
  ['更多', 'M4 7l4 4 4-4-2-1-2 1.500L6 6z'],
]

const SheetBar = () => (
  <div className="flex h-5 bg-linear-to-r from-[#eaf0f8] via-[#f7f9fc] to-white text-[11px] leading-[18px] text-[#222]">
    <div className="flex min-w-0 flex-1 items-start gap-[26px] overflow-hidden pl-2">
      <button type="button" className="relative -mr-3 h-[18px] w-[50px] shrink-0 pr-1">
        <svg viewBox="0 0 50 18" className="absolute inset-0"><path d="M0 0l6 17h38l6-17" fill="#fff" stroke="#c2c7cf" /></svg>
        <span className="relative">Model</span>
      </button>
      {sheets.map((s) => <button key={s} type="button" className="shrink-0">{s}</button>)}
    </div>
    <div className="flex w-[412px] shrink-0">
      <div className="flex gap-[2px] pt-[3px]">
        {pagers.map(([label, d], i) => (
          <button key={label} type="button" aria-label={label} className={`h-[17px] w-[18px] rounded-[3px] border ${i < 2 ? 'border-[#8c8c8c] bg-linear-to-b from-[#f4f4f4] to-[#c4c4c4]' : 'border-[#cfd3dc] bg-[#eff1f7]'}`}>
            <svg viewBox="0 0 16 16" className="h-[15px] w-4"><path d={d} fill="none" stroke="#8a8462" strokeWidth="3" /><path d={d} fill="#fff" fillOpacity={i === 4 ? 1 : 0} stroke="#fff" strokeWidth="1.4" /></svg>
          </button>
        ))}
      </div>
      <div className="ml-[2px] mr-[2px] w-px border-l-2 border-dotted border-[#999]" />
      <div className="flex flex-1 bg-[#f9f9f9]">
        <ScrollButton dir="left" />
        <div className="flex-[111]" />
        <Thumb />
        <div className="flex-[148]" />
        <ScrollButton dir="right" />
      </div>
    </div>
  </div>
)

const DocBar = () => (
  <div className="flex h-[25px] shrink-0 items-end bg-linear-to-r from-[#eef2f8] via-[#f4f7fb] to-white">
    <div className="ml-[9px] flex h-[23px] items-center gap-2 border-r-2 border-[#b4bccb] bg-white pl-[7px] pr-[2px] text-[12px] text-[#222]">
      城投控股大厦施工图.dwg
      <button type="button" aria-label="关闭图纸" className="flex h-[18px] w-[18px] items-center justify-center rounded-[3px] border border-[#cfd4dc] bg-[#f0f1f3]">
        <svg viewBox="0 0 10 10" className="h-[10px] w-[10px]"><path d="M1 1l8 8M9 1L1 9" stroke="#8a8a85" strokeWidth="3" /><path d="M1 1l8 8M9 1L1 9" stroke="#fff" strokeWidth="1.400" /></svg>
      </button>
    </div>
    <button type="button" aria-label="图纸列表" className="mb-[3px] ml-auto mr-3 flex h-[17px] w-[18px] items-center justify-center rounded-[3px] border border-[#c3c9d4] bg-[#edf0f6]">
      <svg viewBox="0 0 10 8" className="h-2 w-[10px]"><path d="M1 3l2-2 2 1.500L7 1l2 2-4 4z" fill="#fff" stroke="#7d7a62" /></svg>
    </button>
  </div>
)

const App = () => (
  <div className={`relative flex h-screen flex-col overflow-hidden bg-linear-to-b from-[#c3cddd] via-[#cdd5e2] to-[#b7a9ad] pl-[5px] pr-[3px] pt-[4px] ${UI_FONT}`}>
    <TitleBar />
    <MenuTabs />
    <Ribbon />
    <DocBar />
    <div className="flex min-h-0 flex-1 bg-[#f4f6f9]">
      <PropertiesPanel />
      <main className="flex min-w-0 flex-1 flex-col">
        <div className="flex min-h-0 flex-1">
          <div className="relative min-w-0 flex-1 overflow-hidden">
            <Drawing />
            <div className="absolute right-[7px] top-[3px] flex gap-1">
              {['M1 6h10v3H1z', 'M4 1h7v6H4zM1 4h7v6H1z', 'M1 1h3l2 3 2-3h3L8 5.500l3 4.500H8L6 7l-2 3H1l3-4.500z'].map((d, i) => (
                <button key={d} type="button" aria-label={['最小化图纸', '还原图纸', '关闭图纸窗口'][i]}>
                  <svg viewBox="0 0 12 11" className="h-[11px] w-3"><path d={d} fill="#fff" stroke="#5a6570" /></svg>
                </button>
              ))}
            </div>
          </div>
          <div className="flex w-[17px] flex-col bg-[#f9f9f9]">
            <ScrollButton dir="up" />
            <div className="flex-[186]" />
            <Thumb />
            <div className="flex-[211]" />
            <ScrollButton dir="down" />
          </div>
        </div>
        <div className="pr-[17px]"><SheetBar /></div>
      </main>
      <div className="w-[5px] shrink-0 border-r border-[#e4e9f1] bg-[#f7f8fa]" />
    </div>
    <footer className="h-[20px] shrink-0 bg-[#f4f6f9] pl-[6px] pr-[5px] pt-[6px]">
      <div className="flex h-[16px] justify-between rounded-tr border border-[#8a8a8a] bg-linear-to-b from-[#f3f4f8] to-[#e2e5ed] pl-1 pr-[7px]">
        <h2 className="text-[13px] leading-[13px] text-[#2c55a5]">命令行</h2>
        <button type="button" aria-label="固定命令行"><Pin /></button>
      </div>
    </footer>

    <div role="tooltip" className="absolute left-[530px] top-[97px] border border-[#888] bg-linear-to-b from-white to-[#e6e9f1] px-2 text-[13px] leading-[20px] text-[#222] shadow-[2px_2px_2px_#777]">标注</div>
    <svg className="pointer-events-none absolute left-0 top-0 h-[330px] w-[610px]" viewBox="0 0 610 330">
      <rect x="475" y="53" width="120" height="75" rx="2" fill="none" stroke="#f5822a" strokeWidth="7" />
      <path d="M374 323L484 158" stroke="#f5822a" strokeWidth="4" strokeLinecap="round" />
      <path d="M491 142l0 17-14-9z" fill="#f5822a" stroke="#f5822a" strokeWidth="2" />
    </svg>
  </div>
)

export default App
